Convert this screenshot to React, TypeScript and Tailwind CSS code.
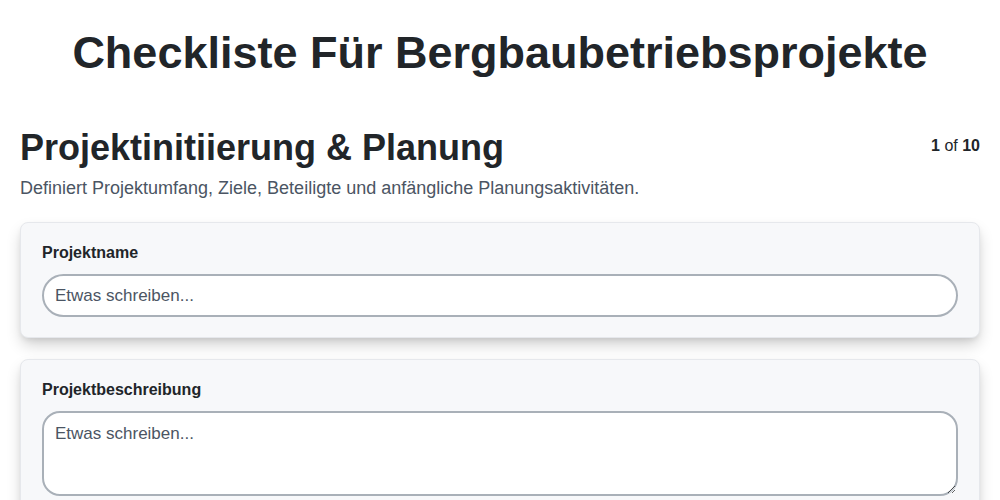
import React from "react";

const fields = [
  { label: "Projektname", type: "input" },
  { label: "Projektbeschreibung", type: "textarea" },
];

export default function App() {
  return (
    <div className="min-h-screen bg-white font-['Liberation_Sans',Arial,sans-serif] text-[#212529]">
      <h1 className="pt-[26px] text-center text-[45px] font-bold leading-[1.2]">
        Checkliste Für Bergbaubetriebsprojekte
      </h1>

      <div className="px-5 pt-[46px]">
        <div className="flex items-start justify-between">
          <h2 className="text-4xl font-bold leading-[1.2]">
            Projektinitiierung &amp; Planung
          </h2>
          <div className="pt-[8px] text-base">
            <span className="font-bold">1</span> of <span className="font-bold">10</span>
          </div>
        </div>
        <p className="mt-[6px] text-lg leading-[27px] text-[#4b5563]">
          Definiert Projektumfang, Ziele, Beteiligte und anfängliche Planungsaktivitäten.
        </p>

        <div className="mt-[20px] flex flex-col gap-[21px]">
          {fields.map((f) => (
            <div
              key={f.label}
              className="rounded-lg border border-[#e6e8ec] bg-[#f7f8fa] px-[21px] pb-5 pt-[18px] shadow-[0_8px_16px_-2px_rgba(0,0,0,0.2),0_3px_6px_-2px_rgba(0,0,0,0.1)]"
            >
              <label className="block text-base font-bold leading-6">{f.label}</label>
              <div className="mt-[9px]">
                {f.type === "input" ? (
                  <input
                    placeholder="Etwas schreiben..."
                    className="block h-[43px] w-full rounded-full border-2 border-[#a9b0b8] bg-white px-[11px] text-[17px] text-[#212529] outline-none placeholder:text-[#4b5563]"
                  />
                ) : (
                  <textarea
                    placeholder="Etwas schreiben..."
                    className="block h-[85px] w-full rounded-[18px] border-2 border-[#a9b0b8] bg-white px-[11px] py-[8px] text-[17px] text-[#212529] outline-none placeholder:text-[#4b5563]"
                  />
                )}
              </div>
            </div>
          ))}
        </div>
      </div>
    </div>
  );
}
